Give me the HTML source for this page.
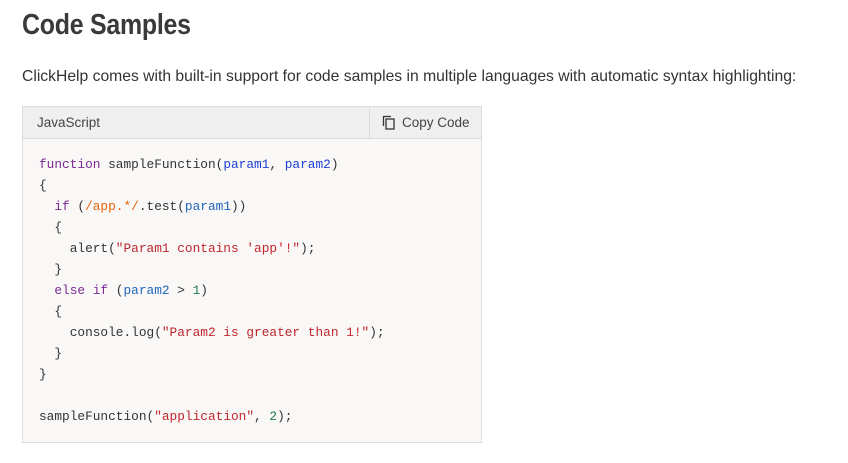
<!DOCTYPE html>
<html><head><meta charset="utf-8"><style>
body{margin:0;background:#fff;width:848px;height:463px;overflow:hidden;font-family:"Liberation Sans",sans-serif;color:#333}
h1{position:absolute;left:22px;top:9px;margin:0;font-family:"Liberation Sans",sans-serif;font-weight:bold;font-size:29px;color:#3a3a3a;letter-spacing:-0.3px;transform:scaleX(0.86);transform-origin:0 0;white-space:nowrap}
p{position:absolute;left:22px;top:68px;margin:0;font-size:15.7px;color:#333;white-space:nowrap}
.box{position:absolute;left:22px;top:106px;width:458px;height:335px;border:1px solid #dcdcdc;background:#f9f8f7}
.hd{height:31px;background:#efefef;border-bottom:1px solid #dcdcdc;position:relative;font-size:13.5px;color:#444}
.hd .l{position:absolute;left:14px;top:8px}
.hd .r{position:absolute;left:346px;top:0;width:112px;height:31px;border-left:1px solid #dcdcdc}
.hd .r span{position:absolute;left:32px;top:8px}
pre{position:absolute;left:16px;top:47px;margin:0;font-family:"Liberation Mono",monospace;font-size:12.8px;line-height:21px;color:#333}
.k{color:#7b2a93}.v{color:#1a3fd6}.p{color:#2266bb}.re{color:#e8620c}.s{color:#c0262d}.n{color:#1f7a4d}
</style></head><body>
<h1>Code Samples</h1>
<p>ClickHelp comes with built-in support for code samples in multiple languages with automatic syntax highlighting:</p>
<div class="box">
<div class="hd"><span class="l">JavaScript</span><div class="r">
<svg style="position:absolute;left:12px;top:8px" width="14" height="15" viewBox="0 0 14 15"><path d="M1.5 11V1.5H9" fill="none" stroke="#333" stroke-width="1.3"/><rect x="4" y="4" width="8" height="10" fill="none" stroke="#333" stroke-width="1.3"/></svg>
<span>Copy Code</span></div></div>
<pre><span class="k">function</span> sampleFunction(<span class="v">param1</span>, <span class="v">param2</span>)
{
  <span class="k">if</span> (<span class="re">/app.*/</span>.test(<span class="p">param1</span>))
  {
    alert(<span class="s">"Param1 contains 'app'!"</span>);
  }
  <span class="k">else if</span> (<span class="p">param2</span> &gt; <span class="n">1</span>)
  {
    console.log(<span class="s">"Param2 is greater than 1!"</span>);
  }
}

sampleFunction(<span class="s">"application"</span>, <span class="n">2</span>);</pre>
</div>
</body></html>
